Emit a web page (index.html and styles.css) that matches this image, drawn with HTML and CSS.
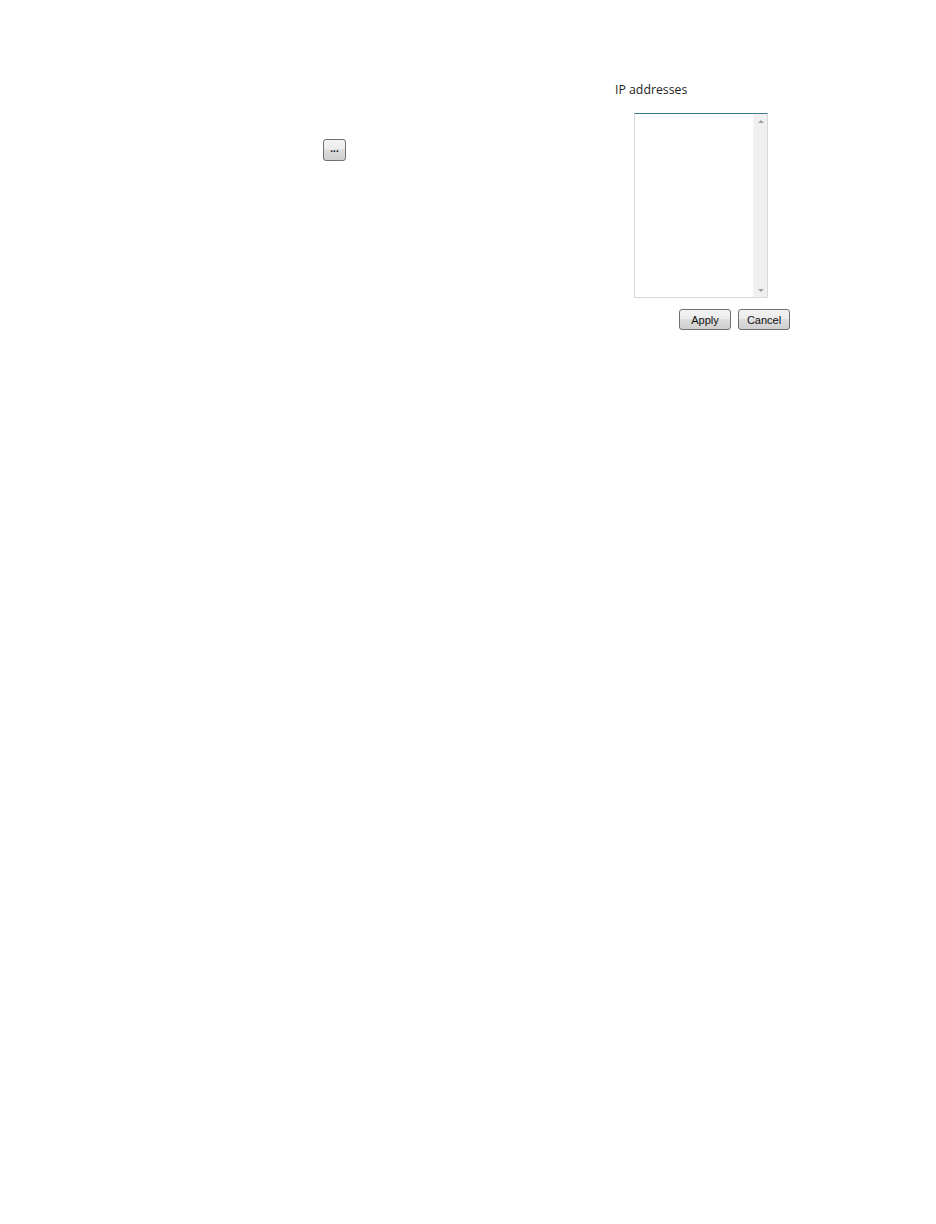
FILE: index.html
```html
<!DOCTYPE html>
<html>
<head>
<meta charset="utf-8">
<link rel="stylesheet" href="styles.css">
</head>
<body>
<div class="page">
  <div class="browse-col">
    <button class="btn browse">...</button>
  </div>
  <div class="ip-col">
    <div class="label">IP addresses</div>
    <div class="listbox">
      <div class="list-area"></div>
      <div class="scrollbar">
        <span class="arrow up"></span>
        <span class="arrow down"></span>
      </div>
    </div>
    <div class="actions">
      <button class="btn action">Apply</button>
      <button class="btn action">Cancel</button>
    </div>
  </div>
</div>
</body>
</html>
```
FILE: styles.css
```css
html, body {
  margin: 0;
  padding: 0;
  background: #ffffff;
}
.page {
  display: flex;
  padding-top: 82px;
  font-family: "Open Sans", "DejaVu Sans", sans-serif;
}
.browse-col {
  width: 292px;
  padding-left: 323px;
  padding-top: 57px;
}
.btn {
  box-sizing: border-box;
  border: 1px solid #707070;
  border-radius: 3px;
  background: linear-gradient(#f3f3f3 0%, #ebebeb 45%, #dddddd 50%, #cfcfcf 100%);
  color: #111111;
  font-family: "Liberation Sans", "DejaVu Sans", sans-serif;
  font-size: 11px;
  padding: 0;
  margin: 0;
  display: flex;
  align-items: center;
  justify-content: center;
}
.browse {
  width: 23px;
  height: 22px;
  font-size: 10px;
  font-weight: bold;
  padding-bottom: 3px;
}
.ip-col {
  display: flex;
  flex-direction: column;
}
.label {
  font-size: 12.3px;
  line-height: 16px;
  color: #1e1e1e;
  height: 16px;
}
.listbox {
  margin-top: 15px;
  margin-left: 19px;
  width: 134px;
  height: 185px;
  box-sizing: border-box;
  border: 1px solid #d5dadf;
  border-top-color: #3d7a96;
  display: flex;
}
.list-area {
  flex: 1;
}
.scrollbar {
  width: 13px;
  background: #f0f0f0;
  border-left: 1px solid #f4f4f4;
  display: flex;
  flex-direction: column;
  justify-content: space-between;
  align-items: center;
  padding: 6px 0 5px;
}
.arrow {
  width: 0;
  height: 0;
  border-left: 3px solid transparent;
  border-right: 3px solid transparent;
}
.arrow.up {
  border-bottom: 3px solid #a0a0a0;
}
.arrow.down {
  border-top: 3px solid #a0a0a0;
}
.actions {
  display: flex;
  gap: 7px;
  margin-top: 11px;
  margin-left: 64px;
}
.action {
  width: 52px;
  height: 21px;
}
```
